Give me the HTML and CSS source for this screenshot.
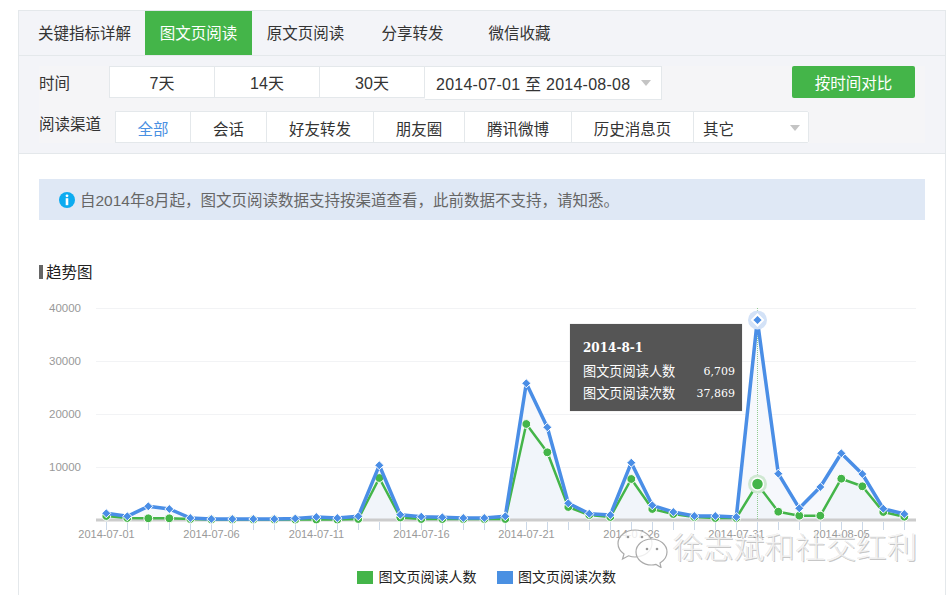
FILE: index.html
```html
<!DOCTYPE html>
<html lang="zh">
<head>
<meta charset="utf-8">
<title>图文页阅读</title>
<link rel="stylesheet" href="styles.css">
</head>
<body>
<div class="panel">
  <nav class="tabs">
    <a class="tab tab-first">关键指标详解</a>
    <a class="tab tab-on">图文页阅读</a>
    <a class="tab">原文页阅读</a>
    <a class="tab">分享转发</a>
    <a class="tab">微信收藏</a>
  </nav>
  <section class="filters">
    <div class="filter-box">
      <div class="row">
        <span class="label label-time">时间</span>
        <div class="seg seg-time">
          <a class="seg-item w105">7天</a>
          <a class="seg-item w105">14天</a>
          <a class="seg-item w105">30天</a>
        </div>
        <div class="date-select"><span>2014-07-01 至 2014-08-08</span><i class="caret"></i></div>
        <a class="compare">按时间对比</a>
      </div>
      <div class="row">
        <span class="label label-channel">阅读渠道</span>
        <div class="seg seg-channel">
          <a class="seg-item w75 seg-on">全部</a>
          <a class="seg-item w76">会话</a>
          <a class="seg-item w107">好友转发</a>
          <a class="seg-item w91">朋友圈</a>
          <a class="seg-item w107">腾讯微博</a>
          <a class="seg-item w122">历史消息页</a>
          <a class="seg-item seg-other"><span>其它</span><i class="caret"></i></a>
        </div>
      </div>
    </div>
  </section>
  <section class="content">
    <div class="notice">
      <svg class="notice-icon" width="16" height="16" viewBox="0 0 16 16"><circle cx="8" cy="8" r="8" fill="#0cabf0"/><circle cx="8" cy="3.8" r="1.4" fill="#fff"/><rect x="6.7" y="6.2" width="2.6" height="7" fill="#fff"/></svg>
      <span>自2014年8月起，图文页阅读数据支持按渠道查看，此前数据不支持，请知悉。</span>
    </div>
    <h2 class="chart-title">趋势图</h2>
    <div class="chart">
      <svg class="chart-svg" width="886" height="265" viewBox="39 295 886 265">
        <defs>
          <marker id="dia" markerUnits="userSpaceOnUse" markerWidth="12" markerHeight="12" refX="6" refY="6"><path d="M6 1.5 10.500 6 6 10.500 1.500 6Z" fill="#4a8ee6" stroke="#fff" stroke-width="1"/></marker>
          <marker id="dot" markerUnits="userSpaceOnUse" markerWidth="12" markerHeight="12" refX="6" refY="6"><circle cx="6" cy="6" r="4.400" fill="#44b549" stroke="#fff" stroke-width="1"/></marker>
        </defs>
        <g class="grid">
          <path d="M96 308.5H916M96 361.5H916M96 414.5H916M96 467.5H916"/>
        </g>
        <g class="ylabels">
          <text x="81" y="312">40000</text>
          <text x="81" y="365">30000</text>
          <text x="81" y="418">20000</text>
          <text x="81" y="471">10000</text>
        </g>
        <polygon class="area-blue" points="106.3,520 106.3,513.3 127.3,516.3 148.3,506.3 169.3,509 190.3,518 211.3,519 232.3,519 253.3,519 274.3,519 295.3,518.5 316.3,517 337.3,518 358.3,516.3 379.3,465.3 400.3,514.7 421.3,516.7 442.3,517.3 463.3,518 484.3,518 505.3,516.3 526.3,383.3 547.3,427.3 568.3,503.3 589.3,513.7 610.3,515 631.3,462.7 652.3,505.3 673.3,512 694.3,516 715.3,516 736.3,517 757.3,320 778.3,473.7 799.3,508.3 820.3,487 841.3,453.3 862.3,474 883.3,508.7 904.3,514 904.3,520"/>
        <polygon class="area-green" points="106.3,520 106.3,516 127.3,518 148.3,518.3 169.3,518.3 190.3,519 211.3,519.5 232.3,519.5 253.3,519.5 274.3,519.5 295.3,519.5 316.3,519.5 337.3,519.5 358.3,519 379.3,478 400.3,517.5 421.3,519 442.3,519 463.3,519 484.3,519 505.3,519 526.3,424 547.3,452.3 568.3,507 589.3,515 610.3,517 631.3,479 652.3,509 673.3,514 694.3,517 715.3,518 736.3,518 757.3,484 778.3,511.7 799.3,515.7 820.3,515.7 841.3,478.7 862.3,486.3 883.3,512 904.3,516.7 904.3,520"/>
        <path class="base" d="M96 520H916"/>
        <path class="ticks" d="M106.5 522V530M127.5 522V530M148.5 522V530M169.5 522V530M190.5 522V530M211.5 522V530M232.5 522V530M253.5 522V530M274.5 522V530M295.5 522V530M316.5 522V530M337.5 522V530M358.5 522V530M379.5 522V530M400.5 522V530M421.5 522V530M442.5 522V530M463.5 522V530M484.5 522V530M505.5 522V530M526.5 522V530M547.5 522V530M568.5 522V530M589.5 522V530M610.5 522V530M631.5 522V530M652.5 522V530M673.5 522V530M694.5 522V530M715.5 522V530M736.5 522V530M757.5 522V530M778.5 522V530M799.5 522V530M820.5 522V530M841.5 522V530M862.5 522V530M883.5 522V530M904.5 522V530"/>
        <g class="xlabels">
          <text x="106.5" y="538">2014-07-01</text>
          <text x="211.5" y="538">2014-07-06</text>
          <text x="316.5" y="538">2014-07-11</text>
          <text x="421.5" y="538">2014-07-16</text>
          <text x="526.5" y="538">2014-07-21</text>
          <text x="631.5" y="538">2014-07-26</text>
          <text x="736.5" y="538">2014-07-31</text>
          <text x="841.5" y="538">2014-08-05</text>
        </g>
        <path class="crosshair" d="M757.5 308V520"/>
        <polyline class="line-green" marker-start="url(#dot)" marker-mid="url(#dot)" marker-end="url(#dot)" points="106.3,516 127.3,518 148.3,518.3 169.3,518.3 190.3,519 211.3,519.5 232.3,519.5 253.3,519.5 274.3,519.5 295.3,519.5 316.3,519.5 337.3,519.5 358.3,519 379.3,478 400.3,517.5 421.3,519 442.3,519 463.3,519 484.3,519 505.3,519 526.3,424 547.3,452.3 568.3,507 589.3,515 610.3,517 631.3,479 652.3,509 673.3,514 694.3,517 715.3,518 736.3,518 757.3,484 778.3,511.7 799.3,515.7 820.3,515.7 841.3,478.7 862.3,486.3 883.3,512 904.3,516.7"/>
        <polyline class="line-blue" marker-start="url(#dia)" marker-mid="url(#dia)" marker-end="url(#dia)" points="106.3,513.3 127.3,516.3 148.3,506.3 169.3,509 190.3,518 211.3,519 232.3,519 253.3,519 274.3,519 295.3,518.5 316.3,517 337.3,518 358.3,516.3 379.3,465.3 400.3,514.7 421.3,516.7 442.3,517.3 463.3,518 484.3,518 505.3,516.3 526.3,383.3 547.3,427.3 568.3,503.3 589.3,513.7 610.3,515 631.3,462.7 652.3,505.3 673.3,512 694.3,516 715.3,516 736.3,517 757.3,320 778.3,473.7 799.3,508.3 820.3,487 841.3,453.3 862.3,474 883.3,508.7 904.3,514"/>
        <circle cx="757.5" cy="320" r="9.500" fill="#d3e2f7"/>
        <path d="M757.5 314.5 763 320 757.5 325.5 752 320Z" fill="#4a8ee6" stroke="#fff" stroke-width="2"/>
        <circle cx="757.5" cy="484" r="9.500" fill="#cfe8d2"/>
        <circle cx="757.5" cy="484" r="6" fill="#44b549" stroke="#fff" stroke-width="1.500"/>
      </svg>
      <div class="tooltip">
        <div class="tip-title">2014-8-1</div>
        <div class="tip-row"><span>图文页阅读人数</span><span class="tip-num">6,709</span></div>
        <div class="tip-row"><span>图文页阅读次数</span><span class="tip-num">37,869</span></div>
      </div>
      <div class="legend">
        <span class="legend-item"><i class="swatch swatch-green"></i>图文页阅读人数</span>
        <span class="legend-item"><i class="swatch swatch-blue"></i>图文页阅读次数</span>
      </div>
      <div class="watermark">
        <svg class="wm-logo" width="56" height="44" viewBox="0 0 56 44">
          <path class="wm-bubble" d="M20 6C10.500 6 3 12 3 19.500c0 4.500 2.500 8 6 10.500l-1.500 5 6-3.200c2 .7 4.300 1.200 6.500 1.200 9.500 0 17-6 17-13.500S29.500 6 20 6Z"/>
          <path class="wm-bubble" d="M36.500 15C28 15 21 20.800 21 28s7 13 15.500 13c1.500 0 3-.2 4.500-.6l5 3.100-1-4.500c4-2.400 7-6.400 7-11C52 20.800 45 15 36.500 15Z"/>
          <circle class="wm-eye" cx="13" cy="13" r="1.300"/><circle class="wm-eye" cx="27" cy="13" r="1.300"/>
          <circle class="wm-eye" cx="32" cy="25" r="1.300"/><circle class="wm-eye" cx="42" cy="25" r="1.300"/>
        </svg>
        <span class="wm-text">徐志斌和社交红利</span>
      </div>
    </div>
  </section>
</div>
</body>
</html>
```
FILE: styles.css
```css
* { box-sizing: border-box; }
html, body { margin: 0; height: 595px; overflow: hidden; background: #fff; }
body {
  padding: 10px 4px 0 18px;
  font-family: "Liberation Sans", "Noto Sans CJK SC", sans-serif;
  color: #222;
}
.panel { border: 1px solid #e4e8eb; border-bottom: 0; height: 600px; }
.tabs { display: flex; height: 45px; background: #f3f4f8; border-bottom: 1px solid #e4e8eb; }
.tab {
  width: 107px; height: 44px; display: flex; align-items: center; justify-content: center;
  padding-bottom: 2px;
  font-size: 15.5px; color: #333;
}
.tab-first { width: 126px; padding-left: 5px; }
.tab-on { background: #44b549; color: #fff; }
.filters { background: #f3f4f8; padding: 10px 20px 10px; border-bottom: 1px solid #e4e8eb; height: 98px; }
.filter-box { background: #f5f5f7; height: 77px; display: flex; flex-direction: column; gap: 11px; }
.row { display: flex; align-items: flex-start; }
.label { font-size: 15.5px; color: #333; line-height: 35px; height: 34px; }
.label-time { width: 70px; }
.label-channel { width: 76px; line-height: 28px; }
.seg { display: flex; background: #fff; }
.seg-item {
  display: flex; align-items: center; justify-content: center;
  background: #fff; border: 1px solid #e4e8eb; border-left: 0;
  font-size: 15.5px; color: #333;
}
.seg-time { border-left: 1px solid #e4e8eb; }
.seg-time .seg-item { height: 32px; font-size: 16px; }
.seg-channel { border-left: 1px solid #e4e8eb; }
.seg-channel .seg-item { height: 32px; padding-top: 2px; }
.w105 { width: 105px; }
.w75 { width: 75px; }
.w76 { width: 76px; }
.w91 { width: 91px; }
.w107 { width: 107px; }
.w122 { width: 122px; }
.seg-on { color: #4a90e2; }
.seg-other { width: 115px; justify-content: space-between; padding: 2px 8px 0 9px; border-radius: 0 2px 2px 0; }
.date-select {
  width: 237px; height: 34px; background: #fff; border: 1px solid #e4e8eb; border-left: 0;
  display: flex; align-items: center; justify-content: space-between; padding: 0 10px 0 11px;
  font-size: 16px; letter-spacing: .25px; color: #333;
}
.caret {
  width: 0; height: 0; border-left: 5.500px solid transparent; border-right: 5.500px solid transparent;
  border-top: 6px solid #c4c4c4; display: block;
}
.compare {
  margin-left: 130px; width: 123px; height: 32px; border-radius: 2px; background: #44b549; color: #fff;
  display: flex; align-items: center; justify-content: center; font-size: 15.5px;
}
.content { padding: 25px 20px 0; }
.notice {
  height: 41px; background: #dfe8f5; display: flex; align-items: center; gap: 5px; padding-left: 20px;
  padding-bottom: 1px;
  font-size: 15.5px; color: #666;
}
.notice-icon { flex: none; margin-top: 1px; }
.chart-title {
  margin: 45px 0 0; height: 14px; font-size: 15.5px; font-weight: 400; line-height: 16px; color: #222;
  border-left: 4px solid #666; padding-left: 3px;
}
.chart { position: relative; margin-top: 16px; }
.chart-svg { display: block; }
.grid path { stroke: #f2f3f5; stroke-width: 1; fill: none; }
.ylabels text { font-size: 11.500px; fill: #999; text-anchor: end; }
.xlabels text { font-size: 11px; fill: #999; text-anchor: middle; }
.base { stroke: #ccc; stroke-width: 3; }
.ticks { stroke: #cbd8e8; stroke-width: 1; fill: none; }
.area-blue { fill: #f6f8fc; }
.area-green { fill: #f1f5fa; }
.crosshair { stroke: #90cb90; stroke-width: 1; stroke-dasharray: 1 1; fill: none; }
.line-green { fill: none; stroke: #44b549; stroke-width: 2.500; stroke-linejoin: round; }
.line-blue { fill: none; stroke: #4a8ee6; stroke-width: 3.500; stroke-linejoin: round; }
.tooltip {
  position: absolute; left: 531px; top: 29px; width: 172px; height: 87px;
  background: #555; padding: 15px 7px 0 13px; color: #fff;
  box-shadow: 0 0 1px #bbb;
}
.tip-title { font-family: "DejaVu Serif", serif; font-weight: 700; font-size: 12px; line-height: 18px; margin-bottom: 4px; }
.tip-row { display: flex; justify-content: space-between; font-size: 13.200px; line-height: 22px; }
.tip-num { font-family: "DejaVu Serif", serif; font-size: 11px; }
.legend { display: flex; gap: 20px; margin: 10px 0 0 318px; font-size: 14px; color: #222; }
.legend-item { display: flex; align-items: center; gap: 5.500px; line-height: 14px; }
.swatch { width: 16px; height: 13px; display: block; }
.swatch-green { background: #44b549; }
.swatch-blue { background: #4a90e2; }
.watermark { position: absolute; left: 576px; top: 229px; display: flex; align-items: center; gap: 2px; }
.wm-logo { display: block; }
.wm-bubble { fill: rgba(255,255,255,.8); stroke: #aaa; stroke-width: 1.200; }
.wm-eye { fill: #999; }
.wm-text {
  font-family: "Noto Sans CJK SC", sans-serif; font-size: 30px; font-weight: 300; letter-spacing: .6px; line-height: 34px;
  margin-top: -2px;
  color: rgba(255,255,255,.7); text-shadow: 1px 1px 0 rgba(150,150,150,.55), -.5px -.5px 0 rgba(180,180,180,.4);
}
```
